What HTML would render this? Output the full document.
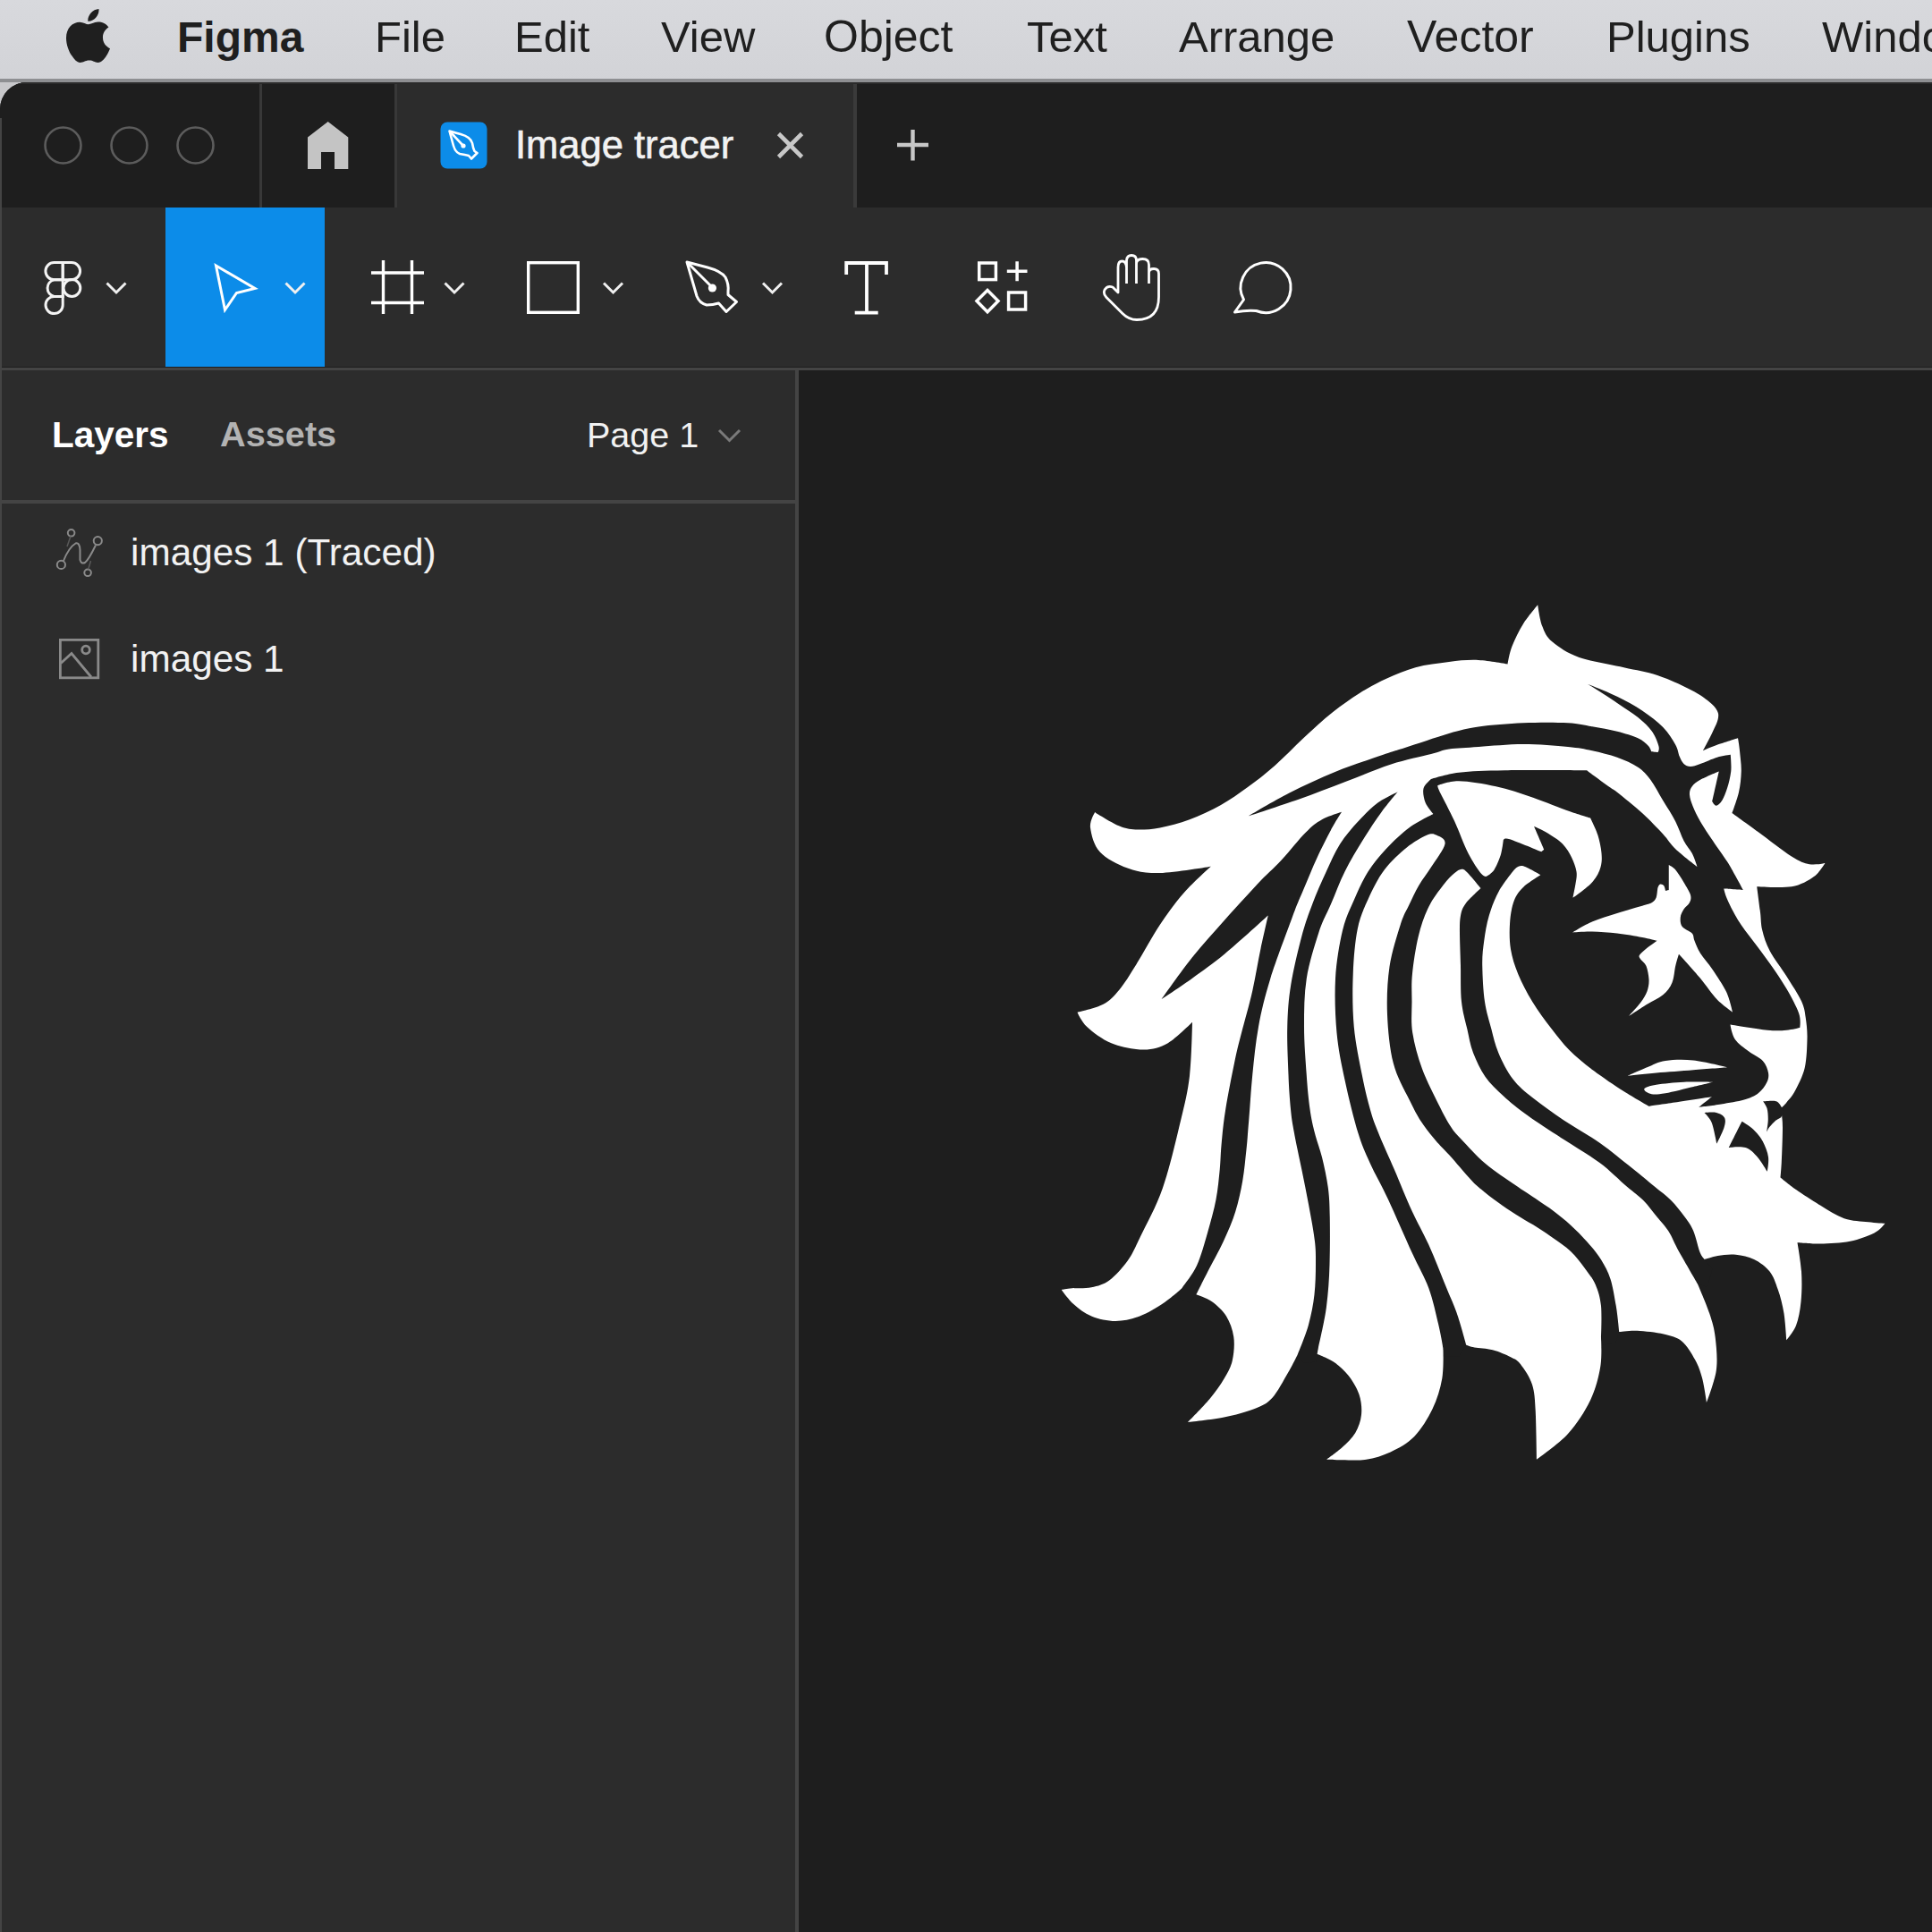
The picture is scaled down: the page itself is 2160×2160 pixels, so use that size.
<!DOCTYPE html>
<html><head><meta charset="utf-8">
<style>
*{margin:0;padding:0;box-sizing:border-box}
html,body{width:2160px;height:2160px;overflow:hidden;background:#1e1e1e}
body{position:relative;font-family:"Liberation Sans",sans-serif}
.abs{position:absolute}
.menu{position:absolute;top:0;left:0;width:2160px;height:90px;background:linear-gradient(#d8d9dd,#d2d3d7)}
.menu span{position:absolute;top:17px;font-size:49px;line-height:49px;color:#1f1f1f;white-space:nowrap}
.t{position:absolute;white-space:nowrap}
</style></head><body>
<!-- menu bar -->
<div class="menu">
  <span style="left:198px;font-weight:bold;font-size:48px">Figma</span>
  <span style="left:419px">File</span>
  <span style="left:575px">Edit</span>
  <span style="left:739px">View</span>
  <span style="left:921px;font-size:50px">Object</span>
  <span style="left:1148px">Text</span>
  <span style="left:1318px">Arrange</span>
  <span style="left:1573px;font-size:50px">Vector</span>
  <span style="left:1796px">Plugins</span>
  <span style="left:2037px">Window</span>
</div>
<div class="abs" style="left:0;top:88px;width:2160px;height:4px;background:#8e8f92"></div>
<!-- window -->
<div class="abs" style="left:0;top:92px;width:60px;height:60px;background:#c8c8cb"></div>
<div class="abs" style="left:0;top:92px;width:2160px;height:2068px;background:#1e1e1e;border-top-left-radius:30px;overflow:hidden">
  <!-- tab bar -->
  <div class="abs" style="left:0;top:0;width:2160px;height:140px;background:#1e1e1e"></div>
  <div class="abs" style="left:290px;top:0;width:3px;height:140px;background:#383838"></div>
  <div class="abs" style="left:444px;top:0;width:511px;height:140px;background:#2c2c2c"></div>
  <div class="abs" style="left:441px;top:0;width:3px;height:140px;background:#383838"></div>
  <div class="abs" style="left:954px;top:0;width:4px;height:140px;background:#3a3a3a"></div>
  <div class="abs" style="left:0;top:0;width:2160px;height:2px;background:#2b2b2b"></div>
  <!-- toolbar -->
  <div class="abs" style="left:0;top:140px;width:2160px;height:178px;background:#2c2c2c"></div>
  <div class="abs" style="left:185px;top:140px;width:178px;height:178px;background:#0c8ce9"></div>
  <div class="abs" style="left:0;top:319px;width:2160px;height:3px;background:#444"></div>
  <!-- left panel -->
  <div class="abs" style="left:0;top:322px;width:890px;height:1760px;background:#2c2c2c"></div>
  <div class="abs" style="left:0;top:40px;width:2px;height:2040px;background:#444"></div>
  <div class="abs" style="left:0;top:467px;width:890px;height:4px;background:#444"></div>
  <div class="abs" style="left:889px;top:322px;width:4px;height:1760px;background:#444"></div>
</div>
<!-- traffic lights -->
<svg class="abs" style="left:0;top:92px" width="300" height="140">
  <circle cx="70.5" cy="70.5" r="20" fill="none" stroke="#5c5c5c" stroke-width="2.6"/>
  <circle cx="144.5" cy="70.5" r="20" fill="none" stroke="#5c5c5c" stroke-width="2.6"/>
  <circle cx="218.5" cy="70.5" r="20" fill="none" stroke="#5c5c5c" stroke-width="2.6"/>
</svg>
<!-- apple -->
<svg class="abs" style="left:74px;top:10px" width="49" height="60" viewBox="0 0 814 1000" preserveAspectRatio="none">
<path fill="#1f1f1f" d="M788.1 340.9c-5.8 4.5-108.2 62.2-108.2 190.5 0 148.4 130.3 200.9 134.2 202.2-.6 3.2-20.7 71.9-68.7 141.9-42.8 61.6-87.5 123.1-155.5 123.1s-85.5-39.5-164-39.5c-76.5 0-103.7 40.8-165.9 40.8s-105.6-57-155.5-127C46.7 790.7 0 663 0 541.8c0-194.4 126.4-297.5 250.8-297.5 66.1 0 121.2 43.4 162.7 43.4 39.5 0 101.1-46 176.3-46 28.5 0 130.9 2.6 198.3 99.2zm-234-181.5c31.1-36.9 53.1-88.1 53.1-139.3 0-7.1-.6-14.3-1.9-20.1-50.6 1.9-110.8 33.7-147.1 75.8-28.5 32.4-55.1 83.6-55.1 135.5 0 7.8 1.3 15.6 1.9 18.1 3.2.6 8.4 1.3 13.6 1.3 45.4 0 102.5-30.4 135.5-71.3z"/>
</svg>
<!-- home -->
<svg class="abs" style="left:0;top:0" width="2160" height="800">
  <path fill="#c4c4c4" d="M344 153.5 L366.7 136 L389.3 153.5 L389.3 189 L374 189 L374 170 L359 170 L359 189 L344 189 Z"/>
  <!-- plugin icon -->
  <rect x="492.5" y="136.5" width="52" height="52" rx="7.5" fill="#0c8ce9"/>
  <g fill="none" stroke="#fff" stroke-width="2.6" stroke-linejoin="round">
    <path d="M502.5 146.5 L515 150 Q526 153 528 160 Q529 166 530.5 169 L533.5 171 L527 177.5 L524 174 Q520 173 514 172 Q509 170 507 163 Z"/>
    <path d="M503 147 L517 162"/>
  </g>
  <circle cx="518" cy="163" r="2.6" fill="#fff"/>
  <!-- close x -->
  <path d="M870.5 149.5 L896.5 175.5 M896.5 149.5 L870.5 175.5" stroke="#c8c8c8" stroke-width="4.6" stroke-linecap="butt"/>
  <!-- plus -->
  <path d="M1003 162 L1038 162 M1020.5 145 L1020.5 179.5" stroke="#c8c8c8" stroke-width="4.4"/>

  <!-- figma logo -->
  <g fill="none" stroke="#f4f4f4" stroke-width="3">
    <path d="M70.2 293.5 L60.5 293.5 A9.6 9.6 0 0 0 60.5 312.7 L70.2 312.7 Z"/>
    <path d="M70.2 293.5 L80 293.5 A9.6 9.6 0 0 1 80 312.7 L70.2 312.7 Z"/>
    <path d="M70.2 312.7 L60.5 312.7 A9.6 9.6 0 0 0 60.5 331.4 L70.2 331.4 Z"/>
    <circle cx="80.4" cy="322" r="9.4"/>
    <path d="M70.2 331.4 L60.5 331.4 A9.6 9.6 0 1 0 70.2 341 Z"/>
  </g>
  <!-- chevrons -->
  <g fill="none" stroke="#f0f0f0" stroke-width="3">
    <path d="M119.5 316.5 L130 327 L140.5 316.5"/>
    <path d="M319.5 316.5 L330 327 L340.5 316.5"/>
    <path d="M497.5 316.5 L508 327 L518.5 316.5"/>
    <path d="M675 316.5 L685.5 327 L696 316.5"/>
    <path d="M853 316.5 L863.5 327 L874 316.5"/>
  </g>
  <!-- select arrow -->
  <path d="M241.5 297 L285 322.5 L264.5 327.5 L251.5 346.5 Z" fill="none" stroke="#fff" stroke-width="3" stroke-linejoin="miter"/>
  <!-- frame -->
  <path d="M428.5 291 V351 M460.5 291 V351 M415 305 H474 M415 338.5 H474" stroke="#fff" stroke-width="3.4"/>
  <!-- rect -->
  <rect x="590.7" y="293.7" width="55.6" height="55.6" fill="none" stroke="#fff" stroke-width="3.4"/>
  <!-- pen -->
  <g fill="none" stroke="#fff" stroke-width="3" stroke-linejoin="round">
    <path d="M768 293 L791 299 Q806 303 811 310 Q815 318 814 326 L814 329.5 L823.5 337.5 L812 348.5 L803.5 339 Q797 341 790 341 Q782 339 779 331 Z"/>
    <path d="M769 294 L796 321"/>
  </g>
  <circle cx="796.4" cy="322" r="4.6" fill="#fff"/>
  <!-- T -->
  <path d="M946.2 307 V294 H991 V307 M969 294 V349.7 M955.7 349.7 H981.7" fill="none" stroke="#fff" stroke-width="3.8" stroke-linejoin="miter"/>
  <!-- components -->
  <g fill="none" stroke="#fff" stroke-width="3.5">
    <rect x="1094.7" y="294" width="18.7" height="18.6"/>
    <path d="M1125.8 303.3 H1148.5 M1137.1 292.3 V314.3"/>
    <path d="M1104 324.5 L1116 336.6 L1104 348.7 L1092 336.6 Z"/>
    <rect x="1127.6" y="327" width="19" height="19"/>
  </g>
  <!-- hand -->
  <path fill="none" stroke="#fff" stroke-width="2.8" stroke-linejoin="round" d="M1250 317 V299 Q1250 292 1254.5 292 Q1259 292 1259.5 299 V291 Q1260 285.5 1265 285.5 Q1270.5 285.5 1270.5 291 V317 M1259.5 299 V317 M1270.5 295 Q1270.5 289.5 1277.5 289.5 Q1284.5 289.5 1284.5 296 V317 M1284.5 305 Q1284.5 300.5 1290 300.5 Q1295.5 300.5 1295.5 306 V332 Q1295.5 357.5 1271 357.5 Q1262 357.5 1255 350.5 L1237 332.5 Q1233 328.5 1235 324 Q1238 319 1244 321 L1250 327 V317"/>
  <!-- comment -->
  <path fill="none" stroke="#fff" stroke-width="3" stroke-linejoin="round" d="M1390.5 335 A28 28 0 1 1 1404.5 347.5 Q1394 346.5 1380.5 349 Z"/>
  <!-- layer icons -->
  <g fill="none" stroke="#8a8a8a" stroke-width="2">
    <path d="M71 627 Q77 612 84.5 607.5 Q89 606 89.5 615 V626 Q91 631 95 629 Q99 626 107 609.5"/>
    <circle cx="79.6" cy="595.8" r="3.8"/>
    <circle cx="109.3" cy="604.6" r="4.6"/>
    <circle cx="68.4" cy="631.4" r="4.6"/>
    <circle cx="98.1" cy="640.3" r="3.8"/>
    <path d="M79 599.5 L75 611 M101.5 627 L98.7 636.5" stroke="#5a5a5a" stroke-width="1.5"/>
  </g>
  <g fill="none" stroke="#8a8a8a" stroke-width="2.8">
    <rect x="67.4" y="715.4" width="42.4" height="42.4"/>
    <path d="M68 741.5 L80 730.5 L102 757"/>
    <circle cx="96" cy="726.5" r="4.3"/>
  </g>
</svg>
<!-- tab title -->
<div class="t" style="left:576px;top:140.5px;font-size:43.5px;line-height:43.5px;color:#f2f2f2;-webkit-text-stroke:0.6px #f2f2f2">Image tracer</div>
<!-- panel header -->
<div class="t" style="left:58px;top:465.5px;font-size:40.5px;line-height:40.5px;color:#fff;font-weight:bold">Layers</div>
<div class="t" style="left:246px;top:466px;font-size:39.7px;line-height:39.7px;color:#b3b3b3;font-weight:bold">Assets</div>
<div class="t" style="left:656px;top:467px;font-size:39.5px;line-height:39.5px;color:#f2f2f2">Page 1</div>
<svg class="abs" style="left:800px;top:475px" width="32" height="24"><path d="M4 6 L15.5 17.5 L27 6" fill="none" stroke="#7a7a7a" stroke-width="3"/></svg>
<!-- layers -->
<div class="t" style="left:146px;top:596.5px;font-size:42.3px;line-height:42.3px;color:#f2f2f2">images 1 (Traced)</div>
<div class="t" style="left:146px;top:715.5px;font-size:42.3px;line-height:42.3px;color:#f2f2f2">images 1</div>
<!-- LION -->
<svg id="lion" class="abs" style="left:0;top:0" width="2160" height="2160">
<g transform="translate(1170 670) scale(0.25)">
<path fill="#ffffff" d="M217 952 C217 952 221 957 239 967 C257 977 300 1004 326 1014 C352 1024 368 1029 398 1030 C428 1031 467 1030 507 1022 C547 1014 594 1002 640 985 C686 968 737 944 780 920 C823 896 860 869 900 840 C940 811 978 782 1020 745 C1062 708 1107 660 1150 620 C1193 580 1238 538 1280 505 C1322 472 1360 445 1400 420 C1440 395 1478 374 1520 355 C1562 336 1603 318 1650 305 C1697 292 1753 286 1800 280 C1847 274 1888 270 1932 272 C1976 274 2062 290 2062 290 C2062 290 2070 240 2082 210 C2094 180 2113 141 2132 110 C2151 79 2197 25 2197 25 C2197 25 2206 92 2217 120 C2228 148 2234 167 2262 190 C2290 213 2329 241 2382 260 C2435 279 2524 292 2582 305 C2640 318 2681 323 2732 340 C2783 357 2849 388 2887 408 C2925 428 2943 442 2962 457 C2981 472 2992 485 2999 498 C3006 511 3006 520 3003 535 C3000 550 2991 567 2980 591 C2969 615 2936 677 2936 677 C2936 677 2973 660 2999 651 C3025 642 3092 621 3092 621 C3092 621 3098 652 3100 677 C3102 702 3108 739 3107 770 C3106 801 3103 832 3096 863 C3089 894 3066 956 3066 956 C3066 956 3138 1008 3182 1040 C3226 1072 3294 1126 3332 1150 C3370 1174 3387 1180 3412 1185 C3437 1190 3482 1180 3482 1180 C3482 1180 3457 1222 3432 1240 C3407 1258 3374 1278 3332 1285 C3290 1292 3177 1285 3177 1285 C3177 1285 3188 1368 3192 1400 C3196 1432 3194 1451 3201 1480 C3208 1509 3217 1539 3235 1573 C3253 1607 3286 1648 3309 1685 C3332 1722 3362 1766 3376 1797 C3390 1828 3391 1843 3395 1871 C3399 1899 3403 1928 3402 1965 C3401 2002 3400 2056 3391 2095 C3382 2134 3360 2175 3346 2201 C3332 2227 3319 2238 3309 2251 C3299 2264 3284 2276 3284 2276 C3284 2276 3288 2298 3289 2313 C3290 2328 3292 2328 3292 2363 C3292 2398 3289 2483 3287 2520 C3285 2557 3282 2586 3282 2586 C3282 2586 3322 2619 3352 2640 C3382 2661 3424 2688 3460 2710 C3496 2732 3531 2756 3567 2769 C3603 2782 3644 2781 3675 2785 C3706 2789 3750 2791 3750 2791 C3750 2791 3728 2821 3702 2834 C3676 2847 3634 2863 3594 2871 C3554 2879 3499 2881 3460 2882 C3421 2883 3358 2877 3358 2877 C3358 2877 3373 2962 3376 3006 C3379 3050 3378 3101 3374 3141 C3370 3181 3363 3219 3352 3248 C3341 3277 3309 3313 3309 3313 C3309 3313 3304 3232 3298 3194 C3292 3156 3282 3118 3271 3087 C3260 3056 3252 3028 3234 3006 C3216 2984 3189 2964 3164 2952 C3139 2940 3110 2934 3083 2931 C3056 2928 3025 2932 3002 2936 C2979 2940 2943 2952 2943 2952 C2943 2952 2911 3060 2911 3060 C2911 3060 2952 3154 2965 3194 C2978 3234 2986 3259 2991 3302 C2996 3345 3002 3402 2995 3450 C2988 3498 2952 3592 2952 3592 C2952 3592 2941 3514 2932 3482 C2923 3450 2915 3427 2900 3400 C2885 3373 2864 3337 2841 3318 C2818 3299 2793 3294 2760 3286 C2727 3278 2675 3273 2642 3271 C2609 3269 2561 3276 2561 3276 C2561 3276 2480 3300 2480 3300 C2480 3300 2485 3385 2477 3432 C2469 3479 2456 3532 2432 3582 C2408 3632 2372 3688 2332 3732 C2292 3776 2192 3847 2192 3847 C2192 3847 2190 3688 2187 3632 C2184 3576 2183 3547 2172 3512 C2161 3477 2136 3442 2120 3421 C2104 3400 2097 3400 2076 3389 C2055 3378 2022 3364 1995 3357 C1968 3350 1934 3350 1914 3346 C1894 3342 1877 3335 1877 3335 C1877 3335 1774 3351 1774 3351 C1774 3351 1777 3441 1769 3486 C1761 3531 1747 3578 1726 3621 C1705 3664 1676 3712 1645 3744 C1614 3776 1574 3797 1538 3814 C1502 3831 1466 3841 1430 3847 C1394 3853 1352 3849 1322 3849 C1292 3849 1252 3847 1252 3847 C1252 3847 1300 3813 1322 3793 C1344 3773 1367 3752 1381 3728 C1395 3704 1405 3676 1408 3647 C1411 3618 1408 3586 1398 3556 C1388 3526 1368 3494 1349 3470 C1330 3446 1308 3427 1285 3411 C1262 3395 1212 3376 1212 3376 C1212 3376 1123 3378 1123 3378 C1123 3378 1099 3427 1080 3459 C1061 3491 1034 3545 1009 3572 C984 3599 964 3607 928 3621 C892 3635 843 3648 794 3658 C745 3668 632 3680 632 3680 C632 3680 702 3609 729 3577 C756 3545 777 3515 794 3486 C811 3457 824 3436 831 3405 C838 3374 842 3331 837 3298 C832 3265 820 3232 804 3206 C788 3180 762 3157 740 3141 C718 3125 670 3109 670 3109 C670 3109 605 3082 605 3082 C605 3082 555 3126 524 3147 C493 3168 453 3192 417 3206 C381 3220 345 3228 309 3228 C273 3228 232 3219 201 3206 C170 3193 143 3172 121 3152 C99 3132 67 3088 67 3088 C67 3088 83 3084 105 3082 C127 3080 172 3083 201 3077 C230 3071 255 3065 282 3045 C309 3025 340 2990 363 2958 C386 2926 394 2904 420 2850 C446 2796 490 2718 520 2632 C550 2546 580 2415 600 2332 C620 2249 631 2206 640 2132 C649 2058 652 1891 652 1891 C652 1891 579 1964 543 1985 C507 2006 477 2014 435 2014 C393 2014 332 2002 290 1985 C248 1968 206 1935 181 1912 C156 1889 138 1847 138 1847 C138 1847 223 1828 254 1811 C285 1794 302 1775 326 1746 C350 1717 369 1685 399 1637 C429 1589 471 1510 507 1456 C543 1402 578 1354 616 1311 C654 1268 735 1195 735 1195 C735 1195 569 1223 507 1224 C445 1225 407 1218 362 1202 C317 1186 267 1160 239 1130 C211 1100 200 1051 196 1021 C192 991 217 952 217 952 Z"/>
<path fill="#1e1e1e" d="M514 1789 C514 1789 605 1660 652 1601 C699 1542 749 1488 797 1434 C845 1380 900 1320 942 1275 C984 1230 1015 1205 1051 1166 C1087 1127 1129 1073 1159 1043 C1189 1013 1205 1000 1232 985 C1259 970 1320 951 1320 951 C1320 951 1290 998 1272 1032 C1254 1066 1231 1111 1210 1156 C1189 1201 1167 1256 1148 1301 C1129 1346 1122 1359 1098 1425 C1074 1491 1026 1616 1001 1697 C976 1778 961 1840 948 1912 C935 1984 928 2057 921 2127 C914 2197 910 2274 905 2330 C900 2386 899 2415 894 2460 C889 2505 885 2554 877 2600 C869 2646 859 2693 845 2738 C831 2783 812 2827 791 2872 C770 2917 741 2968 721 3007 C701 3046 670 3109 670 3109 C670 3109 640 3145 640 3145 C640 3145 585 3122 585 3122 C585 3122 590 3106 605 3082 C620 3058 653 3022 672 2980 C691 2938 707 2879 721 2830 C735 2781 749 2731 758 2684 C767 2637 771 2589 775 2549 C779 2509 778 2487 782 2442 C786 2397 791 2341 801 2280 C811 2219 828 2131 840 2074 C852 2017 858 1993 872 1939 C886 1885 907 1814 921 1751 C935 1688 946 1618 958 1562 C970 1506 991 1414 991 1414 C991 1414 854 1539 797 1586 C740 1633 699 1661 652 1695 C605 1729 514 1789 514 1789 Z"/>
<path fill="#1e1e1e" d="M1570 862 C1570 862 1508 890 1479 912 C1450 934 1424 961 1396 991 C1368 1021 1337 1056 1313 1094 C1289 1132 1272 1173 1251 1218 C1230 1263 1207 1315 1189 1363 C1171 1411 1157 1448 1141 1508 C1125 1568 1104 1657 1093 1724 C1082 1791 1079 1845 1077 1912 C1075 1979 1080 2066 1082 2127 C1084 2188 1088 2236 1092 2280 C1096 2324 1100 2343 1108 2388 C1116 2433 1130 2495 1141 2549 C1152 2603 1163 2657 1173 2711 C1183 2765 1195 2828 1200 2872 C1205 2916 1204 2936 1204 2975 C1204 3014 1203 3064 1198 3109 C1193 3154 1184 3199 1172 3244 C1160 3289 1123 3378 1123 3378 C1123 3378 1150 3415 1150 3415 C1150 3415 1205 3410 1205 3410 C1205 3410 1212 3376 1212 3376 C1212 3376 1208 3386 1215 3351 C1222 3316 1244 3226 1252 3163 C1260 3100 1264 3042 1266 2975 C1268 2908 1268 2822 1267 2764 C1266 2706 1265 2675 1259 2630 C1253 2585 1242 2535 1232 2495 C1222 2455 1209 2424 1200 2388 C1191 2352 1184 2324 1178 2280 C1172 2236 1167 2188 1163 2127 C1159 2066 1152 1984 1152 1912 C1152 1840 1152 1767 1163 1697 C1174 1627 1199 1548 1217 1492 C1235 1436 1252 1409 1272 1363 C1292 1317 1310 1266 1334 1218 C1358 1170 1389 1118 1417 1073 C1445 1028 1474 984 1500 949 C1526 914 1570 862 1570 862 Z"/>
<path fill="#1e1e1e" d="M902 970 C902 970 1021 899 1086 866 C1151 833 1224 799 1293 771 C1362 743 1449 715 1500 697 C1551 679 1550 681 1600 665 C1650 649 1745 616 1800 600 C1855 584 1877 578 1932 570 C1987 562 2065 556 2132 553 C2199 550 2281 550 2332 553 C2383 556 2403 563 2440 569 C2477 575 2518 582 2552 591 C2586 600 2622 610 2645 621 C2668 632 2680 644 2690 654 C2700 664 2705 681 2705 681 C2705 681 2734 684 2734 684 C2734 684 2742 674 2738 658 C2734 642 2724 613 2708 591 C2692 569 2671 549 2645 528 C2619 507 2589 489 2552 464 C2515 439 2422 380 2422 380 C2422 380 2512 415 2552 435 C2592 455 2630 475 2664 498 C2698 521 2732 546 2757 572 C2782 598 2801 629 2813 651 C2825 673 2825 689 2831 703 C2837 717 2842 728 2850 736 C2858 744 2868 748 2880 748 C2892 748 2904 743 2924 736 C2944 729 2976 714 2999 707 C3022 700 3059 695 3059 695 C3059 695 3064 745 3061 770 C3058 795 3051 823 3044 845 C3037 867 3029 887 3021 900 C3013 913 3002 922 2995 923 C2988 924 2977 904 2977 904 C2977 904 3007 770 3007 770 C3007 770 2944 796 2924 807 C2904 818 2895 826 2887 837 C2879 848 2875 859 2876 874 C2877 889 2883 907 2891 927 C2899 947 2909 968 2924 994 C2939 1020 2960 1050 2980 1080 C3000 1110 3027 1147 3044 1173 C3061 1199 3069 1216 3081 1237 C3093 1258 3115 1300 3115 1300 C3115 1300 3029 1294 3029 1294 C3029 1294 3034 1318 3044 1341 C3054 1364 3073 1403 3092 1434 C3111 1465 3136 1496 3160 1528 C3184 1560 3210 1594 3235 1629 C3260 1664 3287 1704 3309 1741 C3331 1778 3355 1824 3365 1853 C3375 1882 3369 1916 3369 1916 C3369 1916 3333 1925 3309 1927 C3285 1929 3266 1931 3224 1927 C3182 1923 3058 1902 3058 1902 C3058 1902 3065 1948 3079 1968 C3093 1988 3120 2006 3141 2022 C3162 2038 3188 2048 3203 2064 C3218 2080 3225 2102 3228 2118 C3231 2134 3228 2148 3220 2163 C3212 2178 3200 2196 3183 2209 C3166 2222 3148 2230 3120 2238 C3092 2246 3051 2252 3017 2258 C2983 2264 2918 2271 2918 2271 C2918 2271 2975 2225 2975 2225 C2975 2225 2857 2243 2810 2250 C2763 2257 2694 2267 2694 2267 C2694 2267 2622 2226 2581 2200 C2540 2174 2487 2138 2447 2108 C2407 2078 2370 2048 2339 2017 C2308 1986 2286 1956 2258 1920 C2230 1884 2198 1841 2173 1800 C2148 1759 2125 1715 2109 1676 C2093 1637 2082 1602 2076 1565 C2070 1528 2070 1489 2072 1453 C2074 1417 2080 1376 2091 1348 C2102 1320 2115 1304 2135 1285 C2155 1266 2210 1233 2210 1233 C2210 1233 2148 1196 2128 1192 C2108 1188 2091 1210 2091 1210 C2091 1210 2043 1270 2024 1304 C2005 1338 1990 1378 1979 1415 C1968 1452 1962 1490 1957 1527 C1952 1564 1948 1594 1949 1639 C1950 1684 1953 1753 1960 1800 C1967 1847 1979 1882 1989 1920 C1999 1958 2005 1990 2021 2028 C2037 2066 2060 2112 2086 2146 C2112 2180 2140 2202 2178 2232 C2216 2262 2263 2296 2312 2329 C2361 2362 2423 2395 2474 2431 C2525 2467 2578 2512 2619 2544 C2660 2576 2690 2602 2719 2626 C2748 2650 2770 2665 2793 2688 C2816 2711 2838 2740 2855 2763 C2872 2786 2882 2799 2893 2825 C2904 2851 2914 2899 2922 2920 C2930 2941 2943 2952 2943 2952 C2943 2952 2978 2995 2978 2995 C2978 2995 2955 3075 2955 3075 C2955 3075 2911 3060 2911 3060 C2911 3060 2852 2959 2830 2920 C2808 2881 2798 2851 2781 2825 C2764 2799 2750 2786 2731 2763 C2712 2740 2692 2711 2669 2688 C2646 2665 2628 2654 2595 2626 C2562 2598 2521 2555 2474 2520 C2427 2485 2366 2450 2312 2415 C2258 2380 2196 2340 2151 2308 C2106 2276 2074 2250 2043 2221 C2012 2192 1984 2167 1962 2135 C1940 2103 1922 2064 1908 2028 C1894 1992 1890 1958 1881 1920 C1872 1882 1861 1847 1856 1800 C1851 1753 1853 1691 1852 1639 C1851 1587 1848 1527 1848 1490 C1848 1453 1848 1437 1852 1415 C1856 1393 1860 1380 1875 1360 C1890 1340 1942 1292 1942 1292 C1942 1292 1896 1236 1882 1222 C1868 1208 1866 1206 1856 1207 C1846 1208 1837 1214 1824 1225 C1811 1236 1795 1251 1776 1276 C1757 1301 1728 1337 1709 1376 C1690 1415 1675 1458 1663 1508 C1651 1558 1641 1625 1636 1674 C1631 1723 1634 1756 1634 1800 C1634 1844 1629 1889 1637 1939 C1645 1989 1660 2046 1680 2100 C1700 2154 1734 2219 1755 2262 C1776 2305 1792 2334 1809 2360 C1826 2386 1830 2388 1855 2415 C1880 2442 1922 2489 1962 2523 C2002 2557 2060 2594 2097 2620 C2134 2646 2158 2660 2187 2680 C2216 2700 2243 2717 2269 2737 C2295 2757 2319 2776 2344 2799 C2369 2822 2395 2848 2418 2874 C2441 2900 2463 2925 2480 2953 C2497 2981 2511 3006 2522 3040 C2533 3074 2540 3121 2547 3160 C2554 3199 2561 3276 2561 3276 C2561 3276 2545 3325 2545 3325 C2545 3325 2488 3335 2488 3335 C2488 3335 2480 3300 2480 3300 C2480 3300 2484 3199 2480 3160 C2476 3121 2467 3093 2455 3065 C2443 3037 2424 3015 2406 2990 C2388 2965 2367 2938 2344 2916 C2321 2894 2294 2877 2269 2859 C2244 2841 2220 2825 2195 2809 C2170 2793 2146 2780 2120 2764 C2094 2748 2067 2731 2040 2712 C2013 2693 1983 2671 1960 2652 C1937 2633 1926 2626 1900 2598 C1874 2570 1828 2515 1801 2485 C1774 2455 1761 2445 1740 2420 C1719 2395 1695 2366 1675 2335 C1655 2304 1642 2278 1621 2235 C1600 2192 1567 2137 1551 2074 C1535 2011 1527 1930 1524 1858 C1521 1786 1524 1710 1534 1643 C1544 1576 1569 1500 1583 1455 C1597 1410 1606 1399 1620 1370 C1634 1341 1648 1309 1665 1280 C1682 1251 1700 1229 1720 1198 C1740 1167 1778 1118 1782 1094 C1786 1070 1759 1062 1745 1055 C1731 1048 1722 1046 1700 1055 C1678 1064 1642 1085 1610 1111 C1578 1137 1540 1172 1511 1210 C1482 1248 1458 1298 1438 1342 C1418 1386 1402 1420 1391 1475 C1380 1530 1374 1601 1371 1674 C1368 1747 1368 1836 1375 1912 C1382 1988 1399 2066 1411 2127 C1423 2188 1435 2236 1447 2280 C1459 2324 1467 2343 1485 2388 C1503 2433 1530 2491 1555 2549 C1580 2607 1609 2681 1635 2737 C1661 2793 1683 2829 1709 2886 C1735 2943 1768 3029 1789 3080 C1810 3131 1819 3148 1834 3190 C1849 3232 1877 3335 1877 3335 C1877 3335 1845 3385 1845 3385 C1845 3385 1785 3385 1785 3385 C1785 3385 1774 3351 1774 3351 C1774 3351 1764 3289 1753 3244 C1742 3199 1729 3134 1709 3080 C1689 3026 1665 2989 1635 2923 C1605 2857 1559 2751 1528 2684 C1497 2617 1469 2571 1447 2522 C1425 2473 1413 2449 1394 2388 C1375 2327 1351 2229 1335 2154 C1319 2079 1305 2015 1298 1939 C1291 1863 1288 1773 1292 1697 C1296 1621 1310 1540 1324 1481 C1338 1422 1357 1387 1376 1343 C1395 1299 1414 1256 1438 1218 C1462 1180 1489 1148 1520 1115 C1551 1082 1589 1046 1624 1020 C1659 994 1730 960 1730 960 C1730 960 1701 927 1694 908 C1687 889 1682 863 1686 846 C1690 829 1720 804 1720 804 C1720 804 1789 782 1844 775 C1899 768 1956 767 2051 765 C2146 763 2416 765 2416 765 C2416 765 2497 825 2520 841 C2543 857 2528 844 2552 863 C2576 882 2630 925 2664 956 C2698 987 2732 1023 2757 1050 C2782 1077 2788 1093 2813 1117 C2838 1141 2910 1196 2910 1196 C2910 1196 2897 1155 2887 1136 C2877 1117 2862 1104 2850 1080 C2838 1056 2828 1024 2813 994 C2798 964 2776 931 2757 900 C2738 869 2720 832 2701 807 C2682 782 2670 768 2645 751 C2620 734 2586 719 2552 707 C2518 695 2477 685 2440 677 C2403 669 2383 665 2332 660 C2281 655 2199 648 2132 648 C2065 648 1987 656 1932 660 C1877 664 1835 665 1800 670 C1765 675 1763 681 1720 692 C1677 703 1605 717 1541 738 C1477 759 1403 791 1334 817 C1265 843 1199 870 1127 895 C1055 920 902 970 902 970 Z"/>
<path fill="#ffffff" d="M1749 833 C1749 833 1800 812 1844 813 C1888 814 1955 825 2010 837 C2065 849 2121 868 2176 887 C2231 906 2298 934 2341 949 C2384 964 2432 978 2432 978 C2432 978 2457 1027 2465 1053 C2473 1079 2480 1111 2482 1135 C2484 1159 2484 1177 2478 1198 C2472 1219 2461 1241 2445 1260 C2429 1279 2398 1302 2383 1314 C2368 1326 2354 1334 2354 1334 C2354 1334 2363 1291 2366 1272 C2369 1253 2373 1237 2370 1218 C2367 1199 2359 1177 2349 1156 C2339 1135 2326 1113 2308 1094 C2290 1075 2259 1057 2238 1044 C2217 1031 2180 1015 2180 1015 C2180 1015 2225 1119 2225 1119 C2225 1119 2213 1129 2213 1129 C2213 1129 2100 1082 2072 1073 C2044 1064 2043 1078 2043 1078 C2043 1078 2038 1122 2031 1144 C2024 1166 2012 1194 2002 1210 C1992 1226 1968 1239 1968 1239 C1968 1239 1958 1244 1944 1227 C1930 1210 1906 1175 1886 1136 C1866 1097 1845 1036 1824 991 C1803 946 1774 892 1761 866 C1748 840 1749 833 1749 833 Z"/>
<path fill="#ffffff" d="M2352 1490 C2352 1490 2407 1456 2440 1442 C2473 1428 2515 1416 2552 1404 C2589 1392 2638 1379 2664 1371 C2690 1363 2698 1362 2708 1356 C2718 1350 2723 1344 2727 1333 C2731 1322 2731 1299 2734 1289 C2737 1279 2742 1275 2746 1274 C2750 1273 2757 1276 2761 1281 C2765 1286 2768 1304 2768 1304 C2768 1304 2783 1300 2783 1300 C2783 1300 2783 1188 2783 1188 C2783 1188 2802 1197 2813 1210 C2824 1223 2839 1247 2850 1266 C2861 1285 2876 1307 2880 1322 C2884 1337 2881 1345 2876 1356 C2871 1367 2857 1375 2850 1386 C2843 1397 2836 1410 2835 1423 C2834 1436 2834 1452 2843 1464 C2852 1476 2878 1484 2887 1494 C2896 1504 2892 1512 2898 1527 C2904 1542 2910 1561 2924 1583 C2938 1605 2961 1629 2980 1658 C2999 1687 3025 1724 3040 1755 C3055 1786 3068 1846 3068 1846 C3068 1846 3023 1815 2999 1790 C2975 1765 2952 1729 2924 1695 C2896 1661 2828 1587 2828 1587 C2828 1587 2818 1618 2813 1639 C2808 1660 2807 1692 2798 1714 C2789 1736 2776 1753 2757 1769 C2738 1785 2712 1795 2686 1811 C2660 1827 2603 1865 2603 1865 C2603 1865 2643 1822 2657 1803 C2671 1784 2680 1770 2686 1753 C2692 1736 2695 1719 2694 1700 C2693 1681 2688 1655 2682 1640 C2676 1625 2661 1617 2656 1609 C2651 1601 2648 1598 2652 1591 C2656 1584 2666 1576 2679 1565 C2692 1554 2731 1527 2731 1527 C2731 1527 2694 1518 2664 1512 C2634 1506 2589 1498 2552 1494 C2515 1490 2473 1487 2440 1486 C2407 1485 2352 1490 2352 1490 Z"/>
<path fill="#ffffff" d="M2599 2131 C2599 2131 2658 2104 2686 2093 C2714 2082 2734 2069 2768 2064 C2802 2059 2847 2057 2893 2062 C2939 2067 3046 2093 3046 2093 C3046 2093 2946 2101 2893 2105 C2840 2109 2776 2114 2727 2118 C2678 2122 2599 2131 2599 2131 Z"/>
<path fill="#ffffff" d="M2673 2190 C2676 2183 2697 2176 2727 2171 C2757 2166 2809 2161 2851 2159 C2893 2157 2980 2159 2980 2159 C2980 2159 2928 2172 2893 2180 C2858 2188 2799 2204 2768 2209 C2737 2214 2722 2216 2706 2213 C2690 2210 2670 2197 2673 2190 Z"/>
<path fill="#1e1e1e" d="M2942 2296 C2942 2296 2981 2292 2996 2296 C3011 2300 3028 2308 3033 2320 C3038 2332 3035 2347 3029 2366 C3023 2385 2997 2435 2997 2435 C2997 2435 2984 2364 2975 2341 C2966 2318 2942 2296 2942 2296 Z"/>
<path fill="#1e1e1e" d="M3110 2335 C3110 2335 3144 2355 3160 2370 C3176 2385 3192 2403 3203 2424 C3214 2445 3225 2472 3228 2495 C3231 2518 3223 2559 3223 2559 C3223 2559 3196 2513 3180 2495 C3164 2477 3148 2459 3126 2452 C3104 2445 3051 2452 3051 2452 C3051 2452 3110 2335 3110 2335 Z"/>
<path fill="#1e1e1e" d="M3205 2246 C3205 2246 3247 2242 3259 2244 C3271 2246 3272 2251 3277 2256 C3282 2261 3290 2276 3290 2276 C3290 2276 3300 2290 3300 2290 C3300 2290 3284 2318 3284 2318 C3284 2318 3267 2326 3259 2333 C3251 2340 3242 2350 3235 2358 C3228 2366 3220 2383 3220 2383 C3220 2383 3227 2344 3227 2326 C3227 2308 3226 2289 3222 2276 C3218 2263 3205 2246 3205 2246 Z"/>
</g>
</svg>
</body></html>
